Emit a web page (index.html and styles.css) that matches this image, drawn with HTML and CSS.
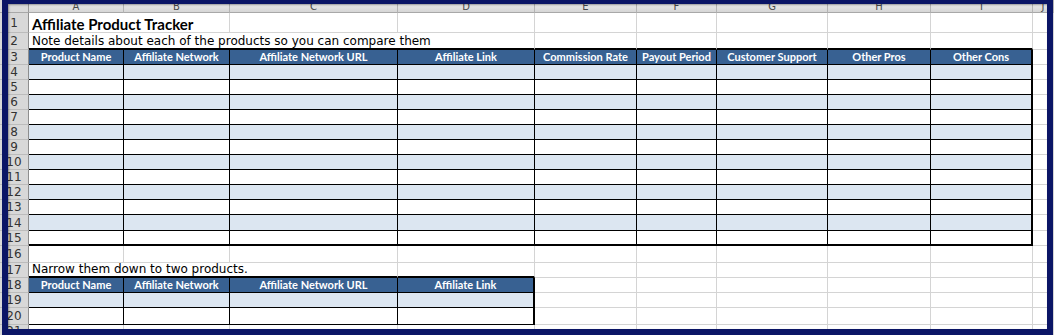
FILE: index.html
```html
<!DOCTYPE html>
<html>
<head>
<meta charset="utf-8">
<link rel="stylesheet" href="styles.css">
</head>
<body>
<div class="page">
  <div class="sheet">
    <!-- column header row -->
    <div class="ch corner"></div>
    <div class="ch">A</div><div class="ch">B</div><div class="ch">C</div><div class="ch">D</div><div class="ch">E</div><div class="ch">F</div><div class="ch">G</div><div class="ch">H</div><div class="ch">I</div><div class="ch">J</div>

    <!-- row 1 -->
    <div class="rh">1</div>
    <div class="c span2 title">Affiliate Product Tracker</div>
    <div class="c"></div><div class="c"></div><div class="c"></div><div class="c"></div><div class="c"></div><div class="c"></div><div class="c"></div><div class="c"></div>

    <!-- row 2 -->
    <div class="rh">2</div>
    <div class="c span4 tb note">Note details about each of the products so you can compare them</div>
    <div class="c tb"></div><div class="c tb"></div><div class="c tb"></div><div class="c tb"></div><div class="c tb"></div>
    <div class="c"></div>

    <!-- row 3 -->
    <div class="rh">3</div>
    <div class="h">Product Name</div><div class="h">Affiliate Network</div><div class="h">Affiliate Network URL</div><div class="h">Affiliate Link</div><div class="h">Commission Rate</div><div class="h">Payout Period</div><div class="h">Customer Support</div><div class="h">Other Pros</div><div class="h tr">Other Cons</div>
    <div class="c"></div>

    <!-- row 4 -->
    <div class="rh">4</div>
    <div class="d alt"></div><div class="d alt"></div><div class="d alt"></div><div class="d alt"></div><div class="d alt"></div><div class="d alt"></div><div class="d alt"></div><div class="d alt"></div><div class="d alt tr"></div>
    <div class="c"></div>
    <!-- row 5 -->
    <div class="rh">5</div>
    <div class="d"></div><div class="d"></div><div class="d"></div><div class="d"></div><div class="d"></div><div class="d"></div><div class="d"></div><div class="d"></div><div class="d tr"></div>
    <div class="c"></div>
    <!-- row 6 -->
    <div class="rh">6</div>
    <div class="d alt"></div><div class="d alt"></div><div class="d alt"></div><div class="d alt"></div><div class="d alt"></div><div class="d alt"></div><div class="d alt"></div><div class="d alt"></div><div class="d alt tr"></div>
    <div class="c"></div>
    <!-- row 7 -->
    <div class="rh">7</div>
    <div class="d"></div><div class="d"></div><div class="d"></div><div class="d"></div><div class="d"></div><div class="d"></div><div class="d"></div><div class="d"></div><div class="d tr"></div>
    <div class="c"></div>
    <!-- row 8 -->
    <div class="rh">8</div>
    <div class="d alt"></div><div class="d alt"></div><div class="d alt"></div><div class="d alt"></div><div class="d alt"></div><div class="d alt"></div><div class="d alt"></div><div class="d alt"></div><div class="d alt tr"></div>
    <div class="c"></div>
    <!-- row 9 -->
    <div class="rh">9</div>
    <div class="d"></div><div class="d"></div><div class="d"></div><div class="d"></div><div class="d"></div><div class="d"></div><div class="d"></div><div class="d"></div><div class="d tr"></div>
    <div class="c"></div>
    <!-- row 10 -->
    <div class="rh">10</div>
    <div class="d alt"></div><div class="d alt"></div><div class="d alt"></div><div class="d alt"></div><div class="d alt"></div><div class="d alt"></div><div class="d alt"></div><div class="d alt"></div><div class="d alt tr"></div>
    <div class="c"></div>
    <!-- row 11 -->
    <div class="rh">11</div>
    <div class="d"></div><div class="d"></div><div class="d"></div><div class="d"></div><div class="d"></div><div class="d"></div><div class="d"></div><div class="d"></div><div class="d tr"></div>
    <div class="c"></div>
    <!-- row 12 -->
    <div class="rh">12</div>
    <div class="d alt"></div><div class="d alt"></div><div class="d alt"></div><div class="d alt"></div><div class="d alt"></div><div class="d alt"></div><div class="d alt"></div><div class="d alt"></div><div class="d alt tr"></div>
    <div class="c"></div>
    <!-- row 13 -->
    <div class="rh">13</div>
    <div class="d"></div><div class="d"></div><div class="d"></div><div class="d"></div><div class="d"></div><div class="d"></div><div class="d"></div><div class="d"></div><div class="d tr"></div>
    <div class="c"></div>
    <!-- row 14 -->
    <div class="rh">14</div>
    <div class="d alt"></div><div class="d alt"></div><div class="d alt"></div><div class="d alt"></div><div class="d alt"></div><div class="d alt"></div><div class="d alt"></div><div class="d alt"></div><div class="d alt tr"></div>
    <div class="c"></div>
    <!-- row 15 -->
    <div class="rh">15</div>
    <div class="d tb"></div><div class="d tb"></div><div class="d tb"></div><div class="d tb"></div><div class="d tb"></div><div class="d tb"></div><div class="d tb"></div><div class="d tb"></div><div class="d tb tr"></div>
    <div class="c"></div>

    <!-- row 16 -->
    <div class="rh">16</div>
    <div class="c"></div><div class="c"></div><div class="c"></div><div class="c"></div><div class="c"></div><div class="c"></div><div class="c"></div><div class="c"></div><div class="c"></div><div class="c"></div>

    <!-- row 17 -->
    <div class="rh">17</div>
    <div class="c span3 tb note">Narrow them down to two products.</div>
    <div class="c tb"></div>
    <div class="c"></div><div class="c"></div><div class="c"></div><div class="c"></div><div class="c"></div><div class="c"></div>

    <!-- row 18 -->
    <div class="rh">18</div>
    <div class="h">Product Name</div><div class="h">Affiliate Network</div><div class="h">Affiliate Network URL</div><div class="h tr">Affiliate Link</div>
    <div class="c"></div><div class="c"></div><div class="c"></div><div class="c"></div><div class="c"></div><div class="c"></div>

    <!-- row 19 -->
    <div class="rh">19</div>
    <div class="d alt"></div><div class="d alt"></div><div class="d alt"></div><div class="d alt tr"></div>
    <div class="c"></div><div class="c"></div><div class="c"></div><div class="c"></div><div class="c"></div><div class="c"></div>

    <!-- row 20 -->
    <div class="rh">20</div>
    <div class="d"></div><div class="d"></div><div class="d"></div><div class="d tr"></div>
    <div class="c"></div><div class="c"></div><div class="c"></div><div class="c"></div><div class="c"></div><div class="c"></div>

    <!-- row 21 -->
    <div class="rh">21</div>
    <div class="c"></div><div class="c"></div><div class="c"></div><div class="c"></div><div class="c"></div><div class="c"></div><div class="c"></div><div class="c"></div><div class="c"></div><div class="c"></div>
  </div>
  <div class="frame"></div>
</div>
</body>
</html>
```

FILE: styles.css
```css
html, body {
  margin: 0;
  padding: 0;
  background: #ffffff;
  overflow: hidden;
}

.page {
  position: relative;
  width: 1054px;
  height: 335px;
  overflow: hidden;
}

.sheet {
  display: grid;
  grid-template-columns: 29px 95px 106px 168px 137px 102px 80px 111px 103px 102px 1fr;
  grid-template-rows: 13px 20px 17px 15px 15px 15px 15px 15px 15px 15px 15px 15px 15px 15px 16px 15px 17px 15px 15px 15px 17px;
  font-family: "DejaVu Sans", sans-serif;
}

.sheet > div {
  box-sizing: border-box;
  min-width: 0;
}

/* column header row */
.ch {
  background: linear-gradient(#f4f4f4, #d6d6d6);
  border-right: 1px solid #b4b4b4;
  border-bottom: 1px solid #a8a8a8;
  color: #4a4a4a;
  font-size: 10px;
  line-height: 14px;
  text-align: center;
  overflow: hidden;
}

.corner {
  background: #dadada;
  border-right: 1px solid #9a9a9a;
}

/* row header */
.rh {
  background: #d8d8d8;
  border-right: 1px solid #8e8e8e;
  border-bottom: 1px solid #bcbcbc;
  color: #333333;
  font-size: 12px;
  display: flex;
  align-items: center;
  justify-content: center;
  line-height: 1;
}

/* plain grid cell */
.c {
  border-right: 1px solid #d4d4d4;
  border-bottom: 1px solid #d4d4d4;
}

.span2 { grid-column: span 2; }
.span3 { grid-column: span 3; }
.span4 { grid-column: span 4; }

.title {
  font-family: "Lato", sans-serif;
  font-weight: 700;
  font-size: 15px;
  color: #000;
  display: flex;
  align-items: flex-end;
  padding: 0 0 0 3px;
  line-height: 16px;
  white-space: nowrap;
}

.note {
  font-size: 12px;
  color: #000;
  display: flex;
  align-items: flex-end;
  padding: 0 0 0 3px;
  line-height: 14px;
  white-space: nowrap;
}

/* table header cells */
.h {
  background: #386192;
  border-right: 1px solid #000;
  border-bottom: 1px solid #000;
  color: #ffffff;
  font-family: "Lato", sans-serif;
  font-weight: 700;
  font-size: 11px;
  line-height: 14px;
  text-align: center;
  white-space: nowrap;
  overflow: hidden;
}

/* table data cells */
.d {
  background: #ffffff;
  border-right: 1px solid #000;
  border-bottom: 1px solid #000;
}

.d.alt {
  background: #dce6f1;
}

.tb {
  border-bottom: 2px solid #000;
}

.tr {
  border-right: 2px solid #000;
}

/* navy frame around the screenshot */
.frame {
  position: absolute;
  left: 2px;
  top: 0;
  right: 1px;
  bottom: 0;
  border-style: solid;
  border-color: #0b1566;
  border-width: 4px 6px 6px 6px;
  box-shadow: inset 1px 1px 2px rgba(0, 0, 0, 0.35);
  pointer-events: none;
}
```
